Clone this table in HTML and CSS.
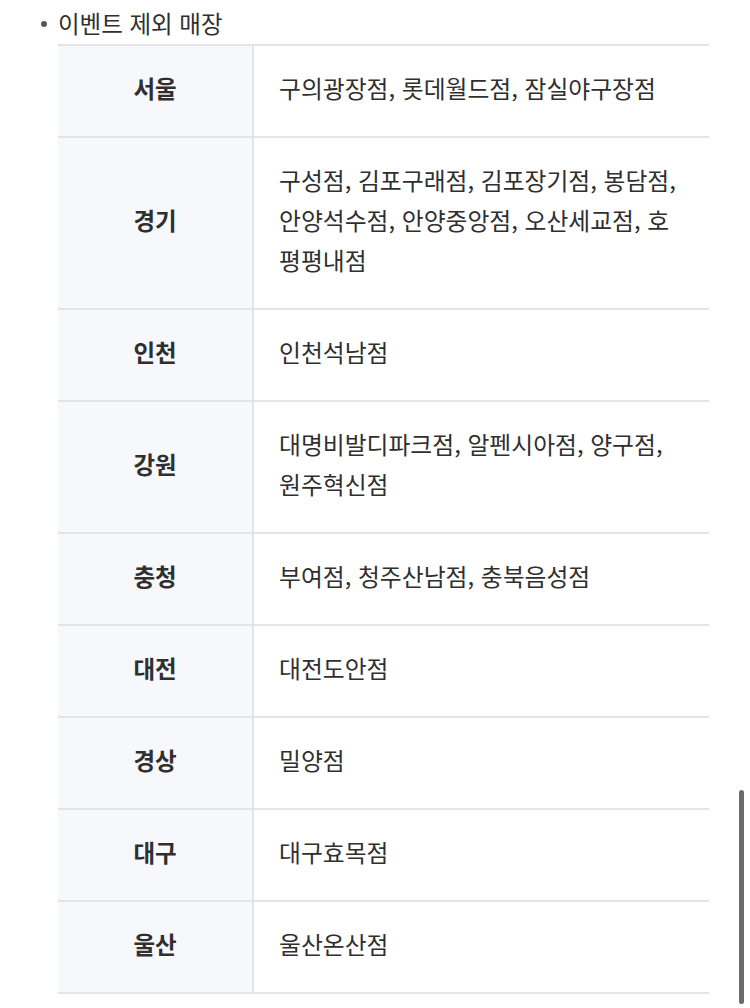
FILE: index.html
```html
<!DOCTYPE html>
<html lang="ko">
<head>
<meta charset="utf-8">
<link rel="stylesheet" href="styles.css">
</head>
<body>
<div class="page">
  <ul class="list">
    <li class="item">
      <span class="item-title">이벤트 제외 매장</span>
      <div class="table">
        <div class="row"><div class="head">서울</div><div class="cell">구의광장점, 롯데월드점, 잠실야구장점</div></div>
        <div class="row"><div class="head">경기</div><div class="cell">구성점, 김포구래점, 김포장기점, 봉담점,<br>안양석수점, 안양중앙점, 오산세교점, 호<br>평평내점</div></div>
        <div class="row"><div class="head">인천</div><div class="cell">인천석남점</div></div>
        <div class="row"><div class="head">강원</div><div class="cell">대명비발디파크점, 알펜시아점, 양구점,<br>원주혁신점</div></div>
        <div class="row"><div class="head">충청</div><div class="cell">부여점, 청주산남점, 충북음성점</div></div>
        <div class="row"><div class="head">대전</div><div class="cell">대전도안점</div></div>
        <div class="row"><div class="head">경상</div><div class="cell">밀양점</div></div>
        <div class="row"><div class="head">대구</div><div class="cell">대구효목점</div></div>
        <div class="row"><div class="head">울산</div><div class="cell">울산온산점</div></div>
      </div>
    </li>
  </ul>
</div>
<div class="scrollbar"></div>
</body>
</html>
```

FILE: styles.css
```css
html, body {
  margin: 0;
  padding: 0;
  background: #ffffff;
}
body {
  font-family: "Noto Sans CJK KR", "Noto Sans", sans-serif;
  color: #2f2f2f;
  width: 750px;
  height: 1008px;
  overflow: hidden;
}
.page {
  padding: 3px 0 0 0;
}
.list {
  list-style: none;
  margin: 0;
  padding: 0 0 0 58px;
}
.item {
  position: relative;
}
.item::before {
  content: "";
  position: absolute;
  left: -17px;
  top: 18px;
  width: 6px;
  height: 6px;
  border-radius: 50%;
  background: #555555;
}
.item-title {
  display: block;
  font-size: 23.5px;
  line-height: 40px;
  height: 40px;
  margin-bottom: 1px;
}
.table {
  width: 651px;
  border-top: 2px solid #e4e4e4;
}
.row {
  display: flex;
  border-bottom: 2px solid #e4e4e4;
}
.head {
  width: 196px;
  flex: none;
  background: #f7f8fb;
  border-right: 2px solid #e4e4e4;
  display: flex;
  align-items: center;
  justify-content: center;
  padding-bottom: 6px;
  box-sizing: border-box;
  font-weight: 700;
  font-size: 23.5px;
}
.cell {
  flex: 1;
  padding: 22px 0 28px 25px;
  font-size: 23.8px;
  line-height: 40px;
}
.scrollbar {
  position: fixed;
  right: 6px;
  top: 790px;
  width: 5px;
  height: 214px;
  border-radius: 3px;
  background: #6b6b6b;
}
```
